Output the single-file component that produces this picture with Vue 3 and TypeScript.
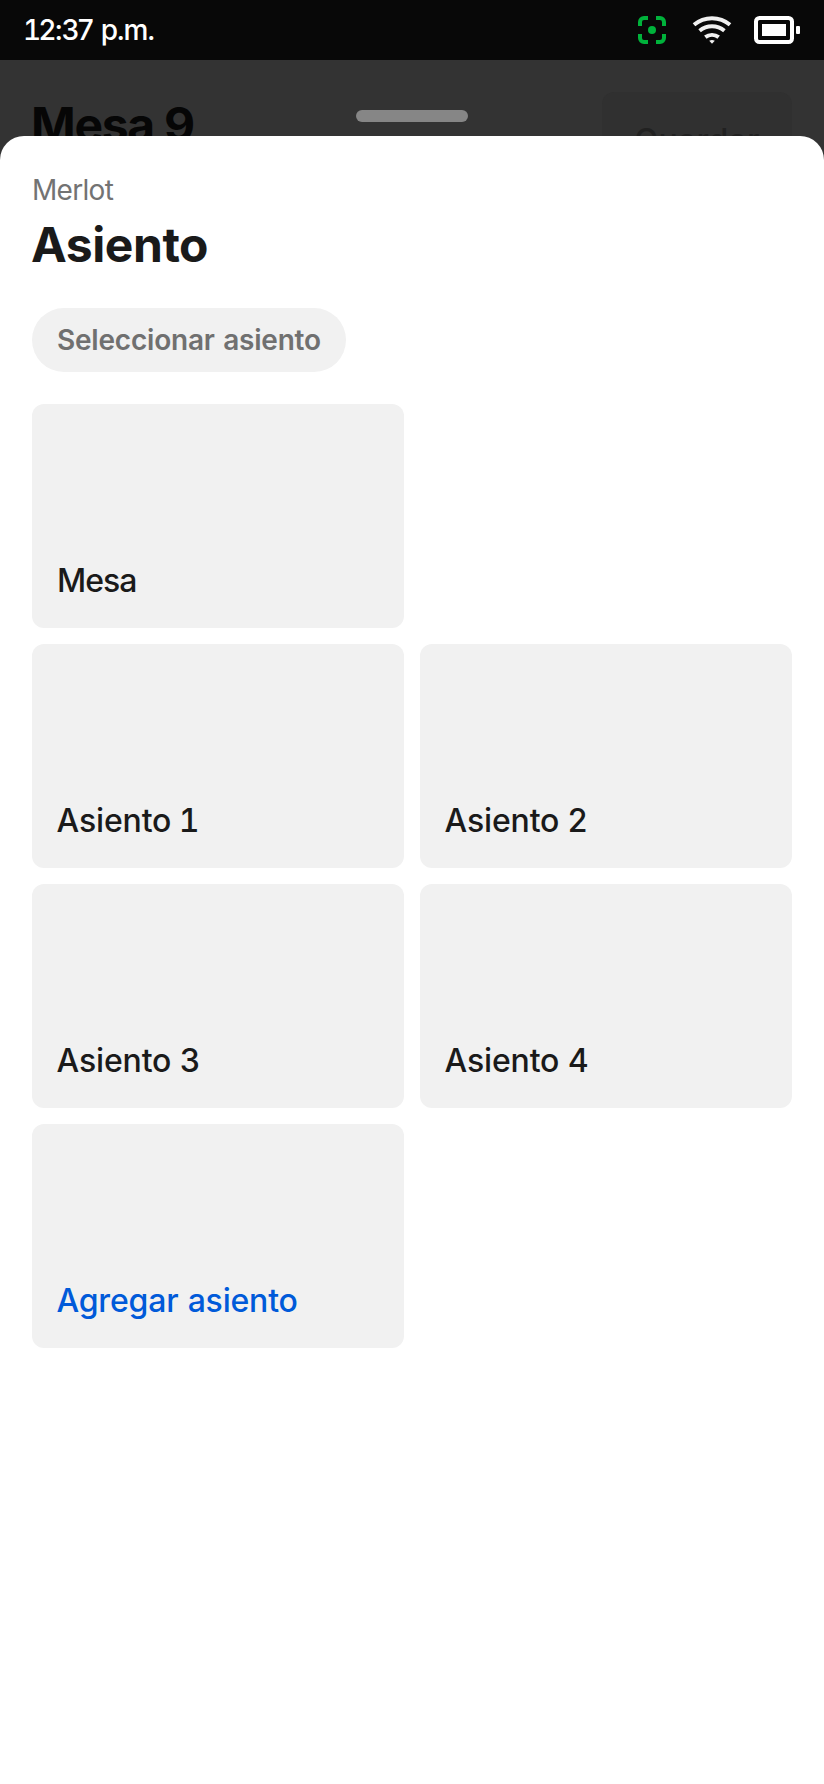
<script setup lang="ts">
interface Seat {
  name: string
  number?: number
  kind: 'table' | 'seat' | 'add'
}

const seats: Seat[] = [
  { name: 'Mesa', kind: 'table' },
  { name: 'Asiento', number: 1, kind: 'seat' },
  { name: 'Asiento', number: 2, kind: 'seat' },
  { name: 'Asiento', number: 3, kind: 'seat' },
  { name: 'Asiento', number: 4, kind: 'seat' },
  { name: 'Agregar asiento', kind: 'add' },
]
</script>

<template>
  <div class="screen">
    <header class="status">
      <span class="time"><span class="clock"><span class="one">1</span>2:37</span> p.m.</span>
      <div class="icons">
        <svg class="scan" width="28" height="28" viewBox="0 0 28 28" fill="none" stroke="#00b23b" stroke-width="4">
          <path d="M2 10V6a4 4 0 0 1 4-4h4M18 2h4a4 4 0 0 1 4 4v4M26 18v4a4 4 0 0 1-4 4h-4M10 26H6a4 4 0 0 1-4-4v-4" />
          <circle cx="14" cy="14" r="4" fill="#00b23b" stroke="none" />
        </svg>
        <svg class="wifi" width="40" height="28" viewBox="0 0 40 28" fill="none" stroke="#f0f0f0" stroke-width="4">
          <path d="M2 8.7a28 28 0 0 1 36 0M7.6 14.7a19.5 19.5 0 0 1 24.8 0M13.3 21.2a11 11 0 0 1 13.4 0" />
          <path d="M17.2 24.8q2.8-1.7 5.6 0L20 27.8z" fill="#f0f0f0" stroke="none" />
        </svg>
        <svg class="battery" width="46" height="28" viewBox="0 0 46 28" fill="#fff">
          <rect x="2" y="2" width="36" height="24" rx="3.5" fill="none" stroke="#fff" stroke-width="4" />
          <rect x="8" y="8" width="24" height="12" />
          <rect x="42" y="10" width="4" height="8" rx="1" />
        </svg>
      </div>
    </header>

    <div class="backdrop">
      <h2 class="table-name">Mesa 9</h2>
      <div class="handle"></div>
      <div class="save">Guardar</div>
    </div>

    <main class="sheet">
      <p class="item">Merlot</p>
      <h1 class="title">Asiento</h1>
      <button class="pill">Seleccionar asiento</button>
      <div class="grid">
        <div v-for="(seat, i) in seats" :key="i" class="card" :class="seat.kind">
          <span v-if="seat.number" class="label">{{ seat.name + ' ' }}<span :class="{ one: seat.number === 1 }">{{ seat.number }}</span></span>
          <span v-else class="label">{{ seat.name }}</span>
        </div>
      </div>
    </main>
  </div>
</template>

<style>
body {
  background: #333;
}
</style>

<style scoped>
.screen {
  box-sizing: border-box;
  width: 824px;
  height: 1784px;
  overflow: hidden;
  display: flex;
  flex-direction: column;
  background: #333;
  font-family: Inter, "Liberation Sans", sans-serif;
}
.status {
  box-sizing: border-box;
  height: 60px;
  flex: none;
  padding: 0 24px;
  display: flex;
  align-items: center;
  justify-content: space-between;
  background: #080808;
  color: #fff;
}
.time {
  font-size: 28px;
  font-weight: 500;
  white-space: nowrap;
  letter-spacing: -1.45px;
  word-spacing: 2.5px;
}
.one {
  font-variant-numeric: tabular-nums;
}
.clock .one {
  margin: 0 -1px;
}
.icons {
  display: flex;
}
.wifi {
  margin-left: 26px;
}
.battery {
  margin-left: 22px;
}
.backdrop {
  box-sizing: border-box;
  height: 76px;
  flex: none;
  padding: 0 32px;
  display: grid;
  grid-template-columns: 1fr 112px 1fr;
  align-items: start;
}
.table-name {
  margin: 35px 0 0 -1px;
  font-size: 48px;
  line-height: 60px;
  font-weight: 700;
  letter-spacing: -1.3px;
  color: #060606;
}
.handle {
  margin-top: 50px;
  height: 12px;
  border-radius: 6px;
  background: #868686;
}
.save {
  box-sizing: border-box;
  justify-self: end;
  width: 190px;
  height: 96px;
  margin-top: 32px;
  border-radius: 12px;
  background: #303030;
  color: #212121;
  font-size: 32px;
  font-weight: 500;
  line-height: 98px;
  letter-spacing: 0.3px;
  text-align: center;
}
.sheet {
  position: relative;
  box-sizing: border-box;
  flex: 1;
  min-height: 0;
  padding: 36px 32px 0;
  border-radius: 24px 24px 0 0;
  background: #fff;
}
.item {
  margin: 0;
  font-size: 28px;
  line-height: 36px;
  letter-spacing: -0.7px;
  color: #737373;
}
.title {
  margin: 7px 0 0 -1px;
  font-size: 48px;
  line-height: 60px;
  font-weight: 700;
  letter-spacing: -0.45px;
  color: #1a1a1a;
}
.pill {
  display: block;
  box-sizing: border-box;
  width: 314px;
  height: 64px;
  margin: 33px 0 32px;
  padding: 0 0 0 25px;
  border: 0;
  border-radius: 32px;
  background: #f1f1f1;
  color: #707070;
  font: 600 28px/64px Inter, "Liberation Sans", sans-serif;
  letter-spacing: -0.2px;
  word-spacing: 1.5px;
  text-align: left;
  white-space: nowrap;
}
.grid {
  display: grid;
  grid-template-columns: 1fr 1fr;
  grid-auto-rows: 224px;
  gap: 16px;
}
.card {
  grid-column: auto;
  display: flex;
  align-items: flex-end;
  padding: 0 24.5px 27px;
  border-radius: 12px;
  background: #f1f1f1;
  color: #1a1a1a;
  font-size: 32px;
  line-height: 40px;
  font-weight: 500;
  letter-spacing: -0.15px;
  white-space: nowrap;
}
.seat .one {
  margin-left: -1px;
}
.table {
  grid-column: 1 / -1;
  margin-right: calc(50% + 8px);
  padding-left: 25px;
  letter-spacing: -1px;
}
.add {
  letter-spacing: -0.2px;
  word-spacing: 1px;
  color: #005ad9;
}
</style>
